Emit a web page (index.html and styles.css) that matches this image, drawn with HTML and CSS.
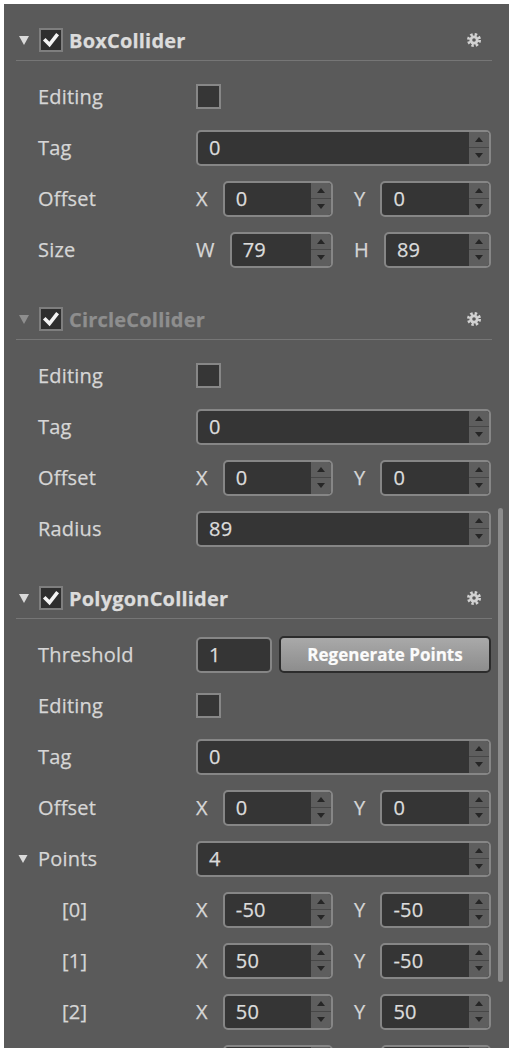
FILE: index.html
```html
<!DOCTYPE html>
<html>
<head>
<meta charset="utf-8">
<link rel="stylesheet" href="styles.css">
</head>
<body>
<div class="panel">

  <section class="comp">
    <div class="comp-head">
      <svg class="tri" viewBox="0 0 9 8"><polygon points="0,0 9,0 4.5,8"/></svg>
      <span class="cb on"><svg viewBox="0 0 20 20"><polyline points="4.5,10.5 8.5,14.5 15.5,5.5"/></svg></span>
      <span class="title">BoxCollider</span>
      <svg class="gear" viewBox="0 0 14 14"><circle class="teeth" cx="7" cy="7" r="5.6"/><circle class="body" cx="7" cy="7" r="4.6"/><circle class="hole" cx="7" cy="7" r="1.8"/></svg>
    </div>
    <div class="rows">
      <div class="row"><span class="lbl">Editing</span><div class="ctl"><span class="cb"></span></div></div>
      <div class="row"><span class="lbl">Tag</span><div class="ctl"><div class="num"><span class="val">0</span><span class="spin"><i class="up"></i><i class="dn"></i></span></div></div></div>
      <div class="row"><span class="lbl">Offset</span><div class="ctl pair">
        <div class="cell"><span class="axis">X</span><div class="num"><span class="val">0</span><span class="spin"><i class="up"></i><i class="dn"></i></span></div></div>
        <div class="cell"><span class="axis">Y</span><div class="num"><span class="val">0</span><span class="spin"><i class="up"></i><i class="dn"></i></span></div></div>
      </div></div>
      <div class="row"><span class="lbl">Size</span><div class="ctl pair">
        <div class="cell"><span class="axis">W</span><div class="num"><span class="val">79</span><span class="spin"><i class="up"></i><i class="dn"></i></span></div></div>
        <div class="cell"><span class="axis">H</span><div class="num"><span class="val">89</span><span class="spin"><i class="up"></i><i class="dn"></i></span></div></div>
      </div></div>
    </div>
  </section>

  <section class="comp dim">
    <div class="comp-head">
      <svg class="tri" viewBox="0 0 9 8"><polygon points="0,0 9,0 4.5,8"/></svg>
      <span class="cb on"><svg viewBox="0 0 20 20"><polyline points="4.5,10.5 8.5,14.5 15.5,5.5"/></svg></span>
      <span class="title">CircleCollider</span>
      <svg class="gear" viewBox="0 0 14 14"><circle class="teeth" cx="7" cy="7" r="5.6"/><circle class="body" cx="7" cy="7" r="4.6"/><circle class="hole" cx="7" cy="7" r="1.8"/></svg>
    </div>
    <div class="rows">
      <div class="row"><span class="lbl">Editing</span><div class="ctl"><span class="cb"></span></div></div>
      <div class="row"><span class="lbl">Tag</span><div class="ctl"><div class="num"><span class="val">0</span><span class="spin"><i class="up"></i><i class="dn"></i></span></div></div></div>
      <div class="row"><span class="lbl">Offset</span><div class="ctl pair">
        <div class="cell"><span class="axis">X</span><div class="num"><span class="val">0</span><span class="spin"><i class="up"></i><i class="dn"></i></span></div></div>
        <div class="cell"><span class="axis">Y</span><div class="num"><span class="val">0</span><span class="spin"><i class="up"></i><i class="dn"></i></span></div></div>
      </div></div>
      <div class="row"><span class="lbl">Radius</span><div class="ctl"><div class="num"><span class="val">89</span><span class="spin"><i class="up"></i><i class="dn"></i></span></div></div></div>
    </div>
  </section>

  <section class="comp">
    <div class="comp-head">
      <svg class="tri" viewBox="0 0 9 8"><polygon points="0,0 9,0 4.5,8"/></svg>
      <span class="cb on"><svg viewBox="0 0 20 20"><polyline points="4.5,10.5 8.5,14.5 15.5,5.5"/></svg></span>
      <span class="title">PolygonCollider</span>
      <svg class="gear" viewBox="0 0 14 14"><circle class="teeth" cx="7" cy="7" r="5.6"/><circle class="body" cx="7" cy="7" r="4.6"/><circle class="hole" cx="7" cy="7" r="1.8"/></svg>
    </div>
    <div class="rows">
      <div class="row"><span class="lbl">Threshold</span><div class="ctl split">
        <div class="num short"><span class="val">1</span></div>
        <button class="btn">Regenerate Points</button>
      </div></div>
      <div class="row"><span class="lbl">Editing</span><div class="ctl"><span class="cb"></span></div></div>
      <div class="row"><span class="lbl">Tag</span><div class="ctl"><div class="num"><span class="val">0</span><span class="spin"><i class="up"></i><i class="dn"></i></span></div></div></div>
      <div class="row"><span class="lbl">Offset</span><div class="ctl pair">
        <div class="cell"><span class="axis">X</span><div class="num"><span class="val">0</span><span class="spin"><i class="up"></i><i class="dn"></i></span></div></div>
        <div class="cell"><span class="axis">Y</span><div class="num"><span class="val">0</span><span class="spin"><i class="up"></i><i class="dn"></i></span></div></div>
      </div></div>
      <div class="row"><span class="lbl"><svg class="tri small" viewBox="0 0 9 8"><polygon points="0,0 9,0 4.5,8"/></svg>Points</span><div class="ctl"><div class="num"><span class="val">4</span><span class="spin"><i class="up"></i><i class="dn"></i></span></div></div></div>
      <div class="row"><span class="lbl idx">[0]</span><div class="ctl pair">
        <div class="cell"><span class="axis">X</span><div class="num"><span class="val">-50</span><span class="spin"><i class="up"></i><i class="dn"></i></span></div></div>
        <div class="cell"><span class="axis">Y</span><div class="num"><span class="val">-50</span><span class="spin"><i class="up"></i><i class="dn"></i></span></div></div>
      </div></div>
      <div class="row"><span class="lbl idx">[1]</span><div class="ctl pair">
        <div class="cell"><span class="axis">X</span><div class="num"><span class="val">50</span><span class="spin"><i class="up"></i><i class="dn"></i></span></div></div>
        <div class="cell"><span class="axis">Y</span><div class="num"><span class="val">-50</span><span class="spin"><i class="up"></i><i class="dn"></i></span></div></div>
      </div></div>
      <div class="row"><span class="lbl idx">[2]</span><div class="ctl pair">
        <div class="cell"><span class="axis">X</span><div class="num"><span class="val">50</span><span class="spin"><i class="up"></i><i class="dn"></i></span></div></div>
        <div class="cell"><span class="axis">Y</span><div class="num"><span class="val">50</span><span class="spin"><i class="up"></i><i class="dn"></i></span></div></div>
      </div></div>
      <div class="row"><span class="lbl idx"></span><div class="ctl pair">
        <div class="cell"><span class="axis blank"></span><div class="num cut"><span class="val"></span><span class="spin"><i class="up"></i><i class="dn"></i></span></div></div>
        <div class="cell"><span class="axis blank"></span><div class="num cut"><span class="val"></span><span class="spin"><i class="up"></i><i class="dn"></i></span></div></div>
      </div></div>
    </div>
  </section>

  <div class="scrollthumb"></div>
</div>
</body>
</html>
```
FILE: styles.css
```css
* { box-sizing: border-box; margin: 0; padding: 0; }
html, body { background: #ffffff; }
body {
  padding: 4px 0 0 4px;
  font-family: "Open Sans", "Liberation Sans", sans-serif;
}
.panel {
  position: relative;
  width: 505px;
  height: 1044px;
  overflow: hidden;
  background: #5a5a5a;
  padding-top: 16px;
  color: #d6d6d6;
  font-size: 20px;
  letter-spacing: 0.2px;
  -webkit-text-stroke: 0.25px currentColor;
}
.comp { margin-bottom: 24px; }
.comp-head {
  display: flex;
  align-items: center;
  height: 41px;
  margin: 0 17px 0 12px;
  padding: 0 11px 0 3px;
  border-bottom: 1px solid #767676;
}
.tri { width: 10px; height: 9px; fill: #dadada; flex: none; }
.dim .comp-head .tri { fill: #8e8e8e; }
.cb {
  display: inline-flex;
  align-items: center;
  justify-content: center;
  width: 25px;
  height: 25px;
  border: 2px solid #878787;
  background: #363636;
  flex: none;
}
.comp-head .cb { width: 24px; height: 24px; margin-left: 10px; background: #2e2e2e; border-color: #7e7e7e; }
.cb svg { width: 20px; height: 20px; }
.cb polyline { fill: none; stroke: #f4f4f4; stroke-width: 3.6; stroke-linecap: square; stroke-linejoin: miter; }
.title {
  margin-left: 6px;
  font-weight: 700;
  font-size: 20px;
  color: #dcdcdc;
  letter-spacing: 0.2px;
}
.dim .title { color: #8e8e8e; }
.gear { width: 14px; height: 14px; margin-left: auto; }
.gear .teeth { fill: none; stroke: #d2d2d2; stroke-width: 2.8; stroke-dasharray: 2.4 2; }
.gear .body { fill: #d2d2d2; }
.gear .hole { fill: #5a5a5a; }

.rows { padding-top: 10px; }
.row {
  display: flex;
  align-items: center;
  height: 51px;
  padding: 0 18px 0 34px;
}
.lbl { width: 158px; flex: none; display: flex; align-items: center; }
.lbl .tri.small { width: 10px; height: 8px; margin-left: -20px; margin-right: 10px; }
.lbl.idx { padding-left: 24px; }
.ctl { flex: 1; display: flex; align-items: center; min-width: 0; }
.pair { display: grid; grid-template-columns: 1fr 1fr; column-gap: 21px; }
.cell { display: flex; align-items: center; min-width: 0; }
.axis { margin-right: 15px; }
.axis.blank { width: 12px; }
.num {
  flex: 1;
  display: flex;
  height: 36px;
  border: 2px solid #868686;
  border-radius: 5px;
  background: #353535;
  overflow: hidden;
  min-width: 0;
}
.val { flex: 1; display: flex; align-items: center; padding-left: 11px; color: #dcdcdc; }
.spin {
  width: 20px;
  flex: none;
  display: flex;
  flex-direction: column;
  background: #5e5e5e;
}
.spin i {
  flex: 1;
  display: flex;
  align-items: center;
  justify-content: center;
}
.spin i.up { border-bottom: 1px solid #474747; }
.spin i::before {
  content: "";
  width: 0;
  height: 0;
  border-left: 4.5px solid transparent;
  border-right: 4.5px solid transparent;
}
.spin i.up::before { border-bottom: 5px solid #262626; }
.spin i.dn::before { border-top: 5px solid #262626; }

.split { gap: 7px; }
.num.short { flex: none; width: 76px; }
.btn {
  flex: 1;
  height: 37px;
  border: 2px solid #2c2c2c;
  border-radius: 5px;
  background: linear-gradient(#a9a9a9, #8d8d8d);
  color: #fbfbfb;
  font-family: "Open Sans", "Liberation Sans", sans-serif;
  font-weight: 700;
  font-size: 17px;
  letter-spacing: 0;
  -webkit-text-stroke: 0.2px #fbfbfb;
}
.scrollthumb {
  position: absolute;
  left: 494px;
  top: 504px;
  width: 5px;
  height: 474px;
  border-radius: 3px;
  background: #8c8c8c;
}
```
